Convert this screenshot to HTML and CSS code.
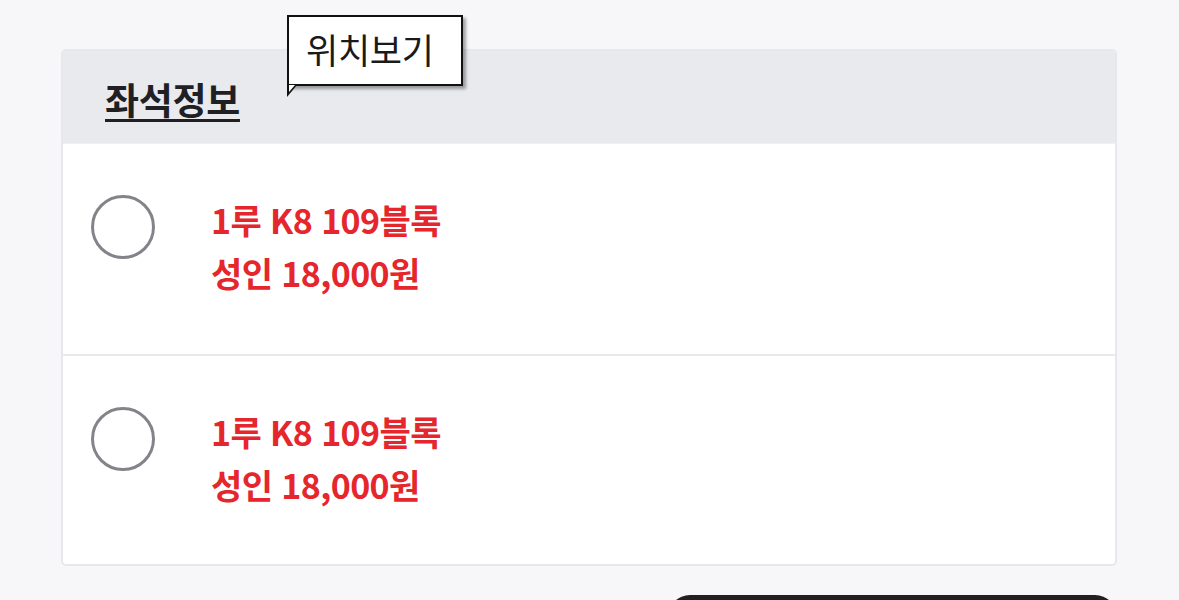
FILE: index.html
```html
<!DOCTYPE html>
<html lang="ko">
<head>
<meta charset="utf-8">
<link rel="stylesheet" href="styles.css">
</head>
<body>
<div class="page">
  <div class="card">
    <div class="card-head">
      <h2 class="title">좌석정보</h2>
      <div class="tip">위치보기</div>
    </div>
    <div class="row">
      <span class="radio"></span>
      <div class="info">
        <div class="line">1루 K8 109블록</div>
        <div class="line">성인 18,000원</div>
      </div>
    </div>
    <div class="row">
      <span class="radio"></span>
      <div class="info">
        <div class="line">1루 K8 109블록</div>
        <div class="line">성인 18,000원</div>
      </div>
    </div>
  </div>
  <div class="actions">
    <button class="btn"></button>
  </div>
</div>
</body>
</html>
```
FILE: styles.css
```css
* { box-sizing: border-box; }
html, body { margin: 0; padding: 0; }
body {
  background: #f7f7f9;
  font-family: "Noto Sans CJK KR", "Noto Sans", sans-serif;
  overflow: hidden;
  height: 600px;
}
.page {
  height: 600px;
  overflow: hidden;
  padding: 49px 62px 0 61px;
}
.card {
  background: #fff;
  border: 2px solid #e7e8eb;
  border-radius: 5px;
}
.card-head {
  position: relative;
  height: 92px;
  background: #e9eaee;
  padding-left: 42px;
  display: flex;
  align-items: center;
  border-radius: 3px 3px 0 0;
}
.title {
  margin: 4px 0 0 0;
  font-size: 37px;
  font-weight: 700;
  letter-spacing: -0.3px;
  color: #1f1f24;
  text-decoration: underline;
  text-decoration-thickness: 3px;
  text-underline-offset: 4px;
}
.tip {
  position: absolute;
  left: 224px;
  top: -36px;
  width: 176px;
  height: 71px;
  background: #fff;
  border: 2px solid #111;
  box-shadow: 3px 3px 3px rgba(0,0,0,0.35);
  font-size: 35px;
  font-weight: 400;
  color: #1a1a1a;
  padding-left: 17px;
  line-height: 64px;
  letter-spacing: -0.3px;
}
.tip::after {
  content: "";
  position: absolute;
  left: -2px;
  bottom: -13px;
  width: 0;
  height: 0;
  border-left: 10px solid #111;
  border-bottom: 12px solid transparent;
}
.tip::before {
  content: "";
  position: absolute;
  left: 0;
  bottom: -8px;
  width: 0;
  height: 0;
  border-left: 6px solid #fff;
  border-bottom: 7px solid transparent;
  z-index: 1;
}
.row {
  height: 210px;
  display: flex;
  align-items: flex-start;
  padding: 51px 0 0 28px;
  border-top: 2px solid #e8e9ec;
}
.card-head + .row { border-top: 1px solid #eef0f2; height: 211px; }
.radio {
  flex: none;
  width: 64px;
  height: 64px;
  border: 3px solid #838489;
  border-radius: 50%;
}
.info {
  margin-left: 56px;
  margin-top: -2px;
}
.line {
  color: #e5262c;
  font-size: 34px;
  font-weight: 700;
  line-height: 53px;
  letter-spacing: -0.6px;
}
.actions {
  display: flex;
  justify-content: flex-end;
  padding-top: 29px;
}
.btn {
  width: 449px;
  height: 50px;
  border: 0;
  border-radius: 22px;
  background: #202022;
}
```
